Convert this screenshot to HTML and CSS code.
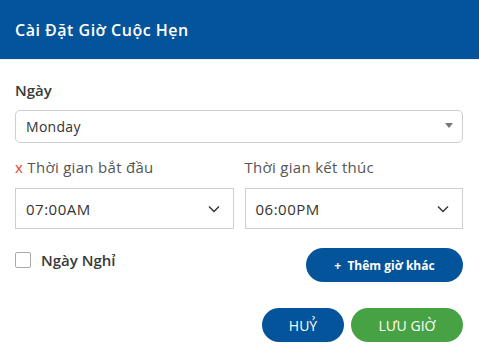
FILE: index.html
```html
<!DOCTYPE html>
<html lang="vi">
<head>
    <meta charset="UTF-8">
    <meta name="viewport" content="width=device-width, initial-scale=1.0">
    <title>Cài Đặt Giờ Cuộc Hẹn</title>
    <link rel="stylesheet" href="styles.css">
</head>
<body>

    <div class="modal">
        <div class="modal-header">
            <h2>Cài Đặt Giờ Cuộc Hẹn</h2>
        </div>

        <div class="modal-body">
            <div class="campo-label">Ngày</div>
            <div class="select-dia">
                <span>Monday</span>
                <span class="triangulo"></span>
            </div>

            <div class="fila-horas">
                <div class="columna">
                    <div class="hora-label"><span class="quitar">x</span> Thời gian bắt đầu</div>
                    <div class="select-hora">
                        <span>07:00AM</span>
                        <svg class="chevron" width="12" height="8" viewBox="0 0 12 8"><path d="M1 1.5 L6 6.5 L11 1.5" fill="none" stroke="#333" stroke-width="1.4"/></svg>
                    </div>
                </div>
                <div class="columna">
                    <div class="hora-label">Thời gian kết thúc</div>
                    <div class="select-hora">
                        <span>06:00PM</span>
                        <svg class="chevron" width="12" height="8" viewBox="0 0 12 8"><path d="M1 1.5 L6 6.5 L11 1.5" fill="none" stroke="#333" stroke-width="1.4"/></svg>
                    </div>
                </div>
            </div>

            <div class="fila-extra">
                <label class="check-nghi">
                    <span class="caja"></span>
                    Ngày Nghỉ
                </label>
                <button class="boton-agregar">+&nbsp; Thêm giờ khác</button>
            </div>
        </div>

        <div class="modal-footer">
            <button class="boton-huy">HUỶ</button>
            <button class="boton-luu">LƯU GIỜ</button>
        </div>
    </div>

</body>
</html>
```

FILE: styles.css
```css
body {
    margin: 0;
    padding: 0;
    background-color: #fff;
    font-family: "Open Sans", "Noto Sans", sans-serif;
    color: #333;
}
.modal {
    width: 479px;
}
.modal-header {
    height: 59px;
    background-color: #03549a;
    border-bottom: 1px solid #e8eef4;
    display: flex;
    align-items: center;
    padding: 0 15px;
    box-sizing: content-box;
}
.modal-header h2 {
    margin: 0;
    color: white;
    font-size: 16px;
    font-weight: 600;
    letter-spacing: 0.5px;
    padding-top: 1px;
}
.modal-body {
    padding: 19px 16px 0 15px;
}
.campo-label {
    font-size: 15px;
    font-weight: 600;
    color: #3a3a3a;
    line-height: 22px;
}
.select-dia {
    margin-top: 9px;
    height: 33px;
    border: 1px solid #cfcfcf;
    border-radius: 5px;
    box-sizing: border-box;
    display: flex;
    justify-content: space-between;
    align-items: center;
    padding: 0 9px 0 10px;
    font-size: 14px;
    letter-spacing: 0.3px;
    color: #333;
}
.triangulo {
    width: 0;
    height: 0;
    border-left: 4px solid transparent;
    border-right: 4px solid transparent;
    border-top: 5px solid #777;
    margin-top: -3px;
}
.fila-horas {
    display: grid;
    grid-template-columns: 1fr 1fr;
    gap: 11px;
    margin-top: 13px;
}
.hora-label {
    font-size: 15px;
    letter-spacing: 0.3px;
    color: #555;
    line-height: 22px;
}
.quitar {
    color: #e8452c;
}
.select-hora {
    margin-top: 10px;
    height: 41px;
    border: 1px solid #cfcfcf;
    box-sizing: border-box;
    display: flex;
    justify-content: space-between;
    align-items: center;
    padding: 0 13px 0 10px;
    font-size: 15px;
    letter-spacing: 0.5px;
    color: #333;
}
.fila-extra {
    display: flex;
    justify-content: space-between;
    align-items: flex-start;
    margin-top: 19px;
}
.check-nghi {
    display: flex;
    align-items: center;
    font-size: 15px;
    font-weight: 600;
    color: #3a3a3a;
    margin-top: 2px;
}
.caja {
    width: 14px;
    height: 14px;
    border: 1px solid #aaa;
    border-radius: 2px;
    margin-right: 10px;
}
.boton-agregar {
    width: 157px;
    height: 34px;
    background-color: #03549a;
    color: white;
    font-family: inherit;
    font-size: 12px;
    font-weight: bold;
    border: none;
    border-radius: 17px;
    cursor: pointer;
}
.modal-footer {
    display: flex;
    justify-content: flex-end;
    gap: 7px;
    padding: 26px 16px 0 15px;
}
.boton-huy,
.boton-luu {
    height: 34px;
    color: white;
    font-family: inherit;
    font-size: 14px;
    border: none;
    border-radius: 17px;
    cursor: pointer;
}
.boton-huy {
    width: 82px;
    background-color: #03549a;
}
.boton-luu {
    width: 112px;
    background-color: #47a244;
}
```
